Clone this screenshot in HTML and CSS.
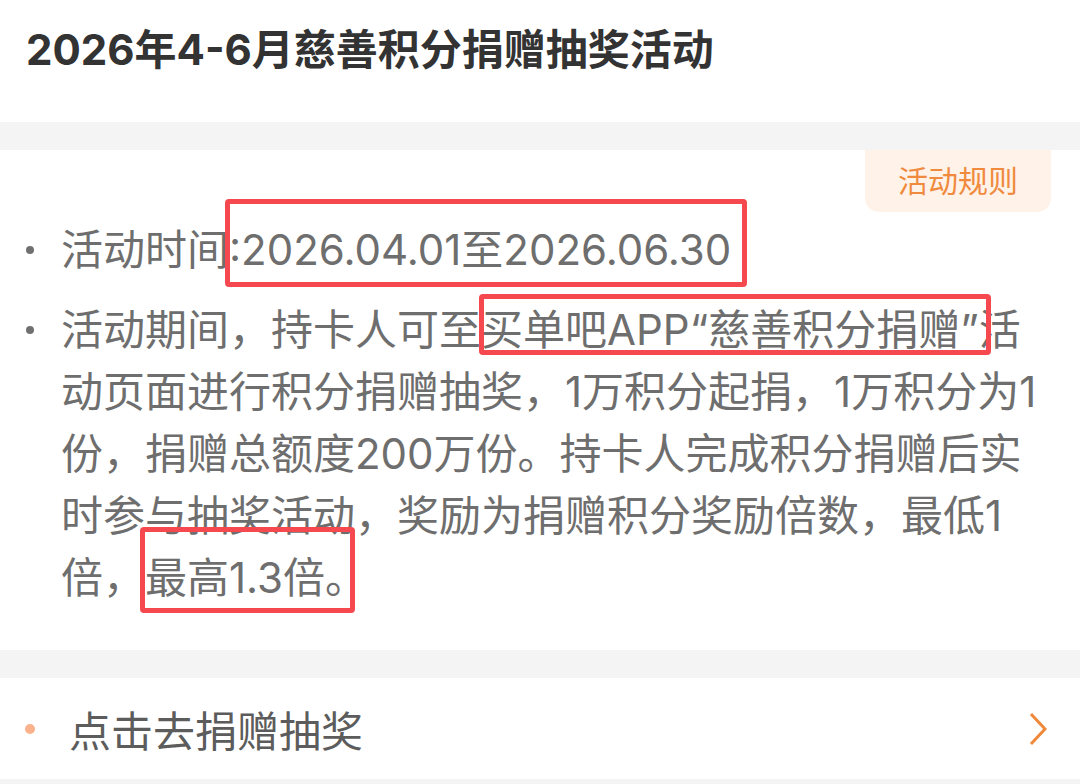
FILE: index.html
```html
<!DOCTYPE html>
<html lang="zh">
<head>
  <meta charset="UTF-8">
  <meta name="viewport" content="width=device-width, initial-scale=1.0">
  <title>慈善积分捐赠抽奖活动</title>
  <link rel="stylesheet" href="styles.css">
</head>
<body>
  <header class="page-head">
    <h1>2026年4-6月慈善积分捐赠抽奖活动</h1>
  </header>

  <section class="panel">
    <div class="panel-top">
      <a class="rules-btn" href="#">活动规则</a>
    </div>
    <ul class="rules">
      <li><p>活动时间<span class="mark mark-time">:2026.04.01至2026.06.30</span></p></li>
      <li><p>活动期间，持卡人可至<span class="mark mark-app">买单吧APP“慈善积分捐赠”</span>活动页面进行积分捐赠抽奖，1万积分起捐，1万积分为1份，捐赠总额度200万份。持卡人完成积分捐赠后实时参与抽奖活动，奖励为捐赠积分奖励倍数，最低1倍，<span class="mark mark-max">最高1.3倍。</span></p></li>
    </ul>
  </section>

  <a class="entry-row" href="#">
    <span class="entry-dot"></span>
    <span class="entry-text">点击去捐赠抽奖</span>
    <svg class="entry-arrow" width="18" height="34" viewBox="0 0 18 34">
      <path d="M2 2 L16 17 L2 32" fill="none" stroke="#f0883a" stroke-width="3" stroke-linejoin="miter"/>
    </svg>
  </a>
</body>
</html>
```

FILE: styles.css
```css
body {
  margin: 0;
  background-color: #f4f4f4;
  font-family: Inter, "Noto Sans CJK SC", sans-serif;
  font-variant-numeric: proportional-nums;
  height: 784px;
  overflow: hidden;
}
a {
  text-decoration: none;
}

/* 頁面標題 */
.page-head {
  background-color: #fff;
  height: 122px;
}
.page-head h1 {
  margin: 0;
  padding: 21px 26px 0;
  font-size: 42px;
  line-height: 58px;
  font-weight: 700;
  color: #333;
}

/* 規則區塊 */
.panel {
  background-color: #fff;
  margin-top: 28px;
  padding-bottom: 41px;
}
.panel-top {
  display: flex;
  justify-content: flex-end;
  padding-right: 29px;
}
.rules-btn {
  width: 186px;
  height: 62px;
  line-height: 62px;
  text-align: center;
  font-size: 30px;
  color: #ef8a3e;
  background-color: #fff2e8;
  border-radius: 0 0 14px 14px;
}
.rules {
  list-style: none;
  margin: 7px 0 0;
  padding: 0 26px 0 0;
}
.rules li {
  display: flex;
  font-size: 42px;
  line-height: 62px;
  color: #6e6e6e;
}
.rules li + li {
  margin-top: 18px;
}
.rules li::before {
  content: "";
  flex: none;
  width: 8px;
  height: 8px;
  border-radius: 50%;
  background-color: #707070;
  margin: 27px 27px 0 26px;
}
.rules p {
  margin: 0;
}

/* 紅框標註 */
.mark {
  display: inline-block;
  position: relative;
  vertical-align: top;
}
.mark::after {
  content: "";
  position: absolute;
  border: 5px solid #f6494f;
  border-radius: 4px;
}
.mark-time::after {
  top: -20px;
  bottom: -6px;
  left: -4px;
  right: -16px;
}
.mark-app::after {
  top: -5px;
  bottom: 6px;
  left: -2px;
  right: -12px;
}
.mark-max::after {
  top: -20px;
  bottom: -4px;
  left: -5px;
  right: 12px;
}

/* 入口列 */
.entry-row {
  display: flex;
  align-items: center;
  height: 101px;
  margin-top: 28px;
  padding: 0 33px 0 25px;
  background-color: #fff;
}
.entry-dot {
  width: 10px;
  height: 10px;
  border-radius: 50%;
  background-color: #f9b28b;
  margin-right: 34px;
}
.entry-text {
  flex: 1;
  font-size: 42px;
  color: #5c5c5c;
}
.entry-arrow {
  display: block;
}
```
